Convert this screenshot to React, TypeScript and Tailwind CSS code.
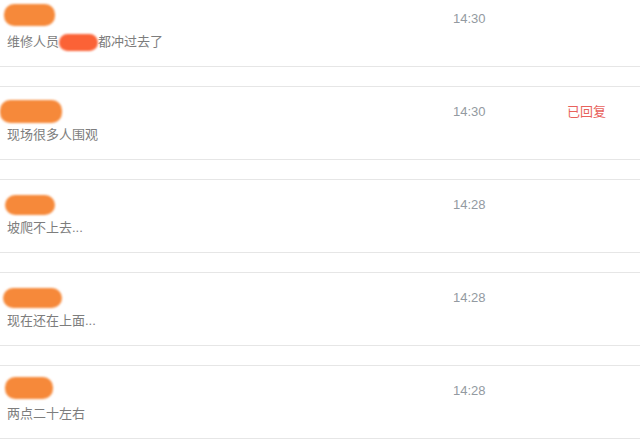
type Message = {
  id: number;
  text: string;
  time: string;
  replied?: boolean;
  blob: { left: number; top: number; width: number; height: number };
  redact?: boolean;
};

const messages: Message[] = [
  { id: 1, text: "维修人员", time: "14:30", redact: true, blob: { left: 4, top: 11, width: 51, height: 22 } },
  { id: 2, text: "现场很多人围观", time: "14:30", replied: true, blob: { left: 0, top: 14, width: 62, height: 23 } },
  { id: 3, text: "坡爬不上去...", time: "14:28", blob: { left: 5, top: 16, width: 50, height: 20 } },
  { id: 4, text: "现在还在上面...", time: "14:28", blob: { left: 3, top: 16, width: 59, height: 20 } },
  { id: 5, text: "两点二十左右", time: "14:28", blob: { left: 5, top: 12, width: 48, height: 22 } },
];

const font = { fontFamily: '"Liberation Sans", "Noto Sans CJK SC", sans-serif' };

export default function App() {
  return (
    <div className="w-[640px] h-[441px] overflow-hidden bg-white" style={font}>
      <div className="-mt-[7px] flex flex-col gap-[19px]">
        {messages.map((msg) => (
          <div
            key={msg.id}
            className="relative h-[74px] border-y border-[#e6e6e6] grid grid-cols-[453px_114px_1fr]"
          >
            <div className="relative">
              <span
                className="absolute rounded-[10px] bg-[#f6893a] blur-[1px]"
                style={{
                  left: msg.blob.left,
                  top: msg.blob.top - 1,
                  width: msg.blob.width,
                  height: msg.blob.height,
                }}
              />
              <div className="absolute left-[7px] top-[38px] flex items-center text-[13px] leading-[20px] text-[#7d7d7d]">
                <span>{msg.text}</span>
                {msg.redact && (
                  <>
                    <span className="w-[39px] h-[17px] rounded-full bg-[#fb6236] blur-[1px]" />
                    <span>都冲过去了</span>
                  </>
                )}
              </div>
            </div>
            <div className="pt-[15px] text-[13px] leading-[20px] text-[#939aa1]">{msg.time}</div>
            <div className="pt-[15px] text-[13px] leading-[20px] text-[#e8625c]">
              {msg.replied ? "已回复" : ""}
            </div>
          </div>
        ))}
      </div>
    </div>
  );
}
